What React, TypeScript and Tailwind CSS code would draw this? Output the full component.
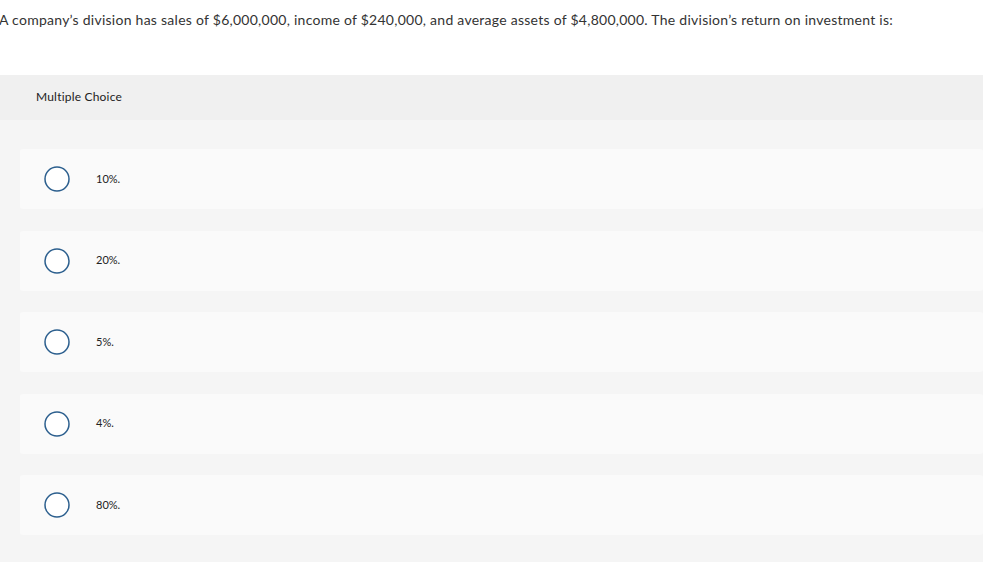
import React from 'react'

const OPTIONS = ['10%.', '20%.', '5%.', '4%.', '80%.']

function Radio() {
  return (
    <svg width="26" height="26" viewBox="0 0 26 26" className="shrink-0">
      <circle cx="13" cy="13" r="12" fill="#ffffff" stroke="#2c5f8e" strokeWidth="1.5" />
    </svg>
  )
}

export default function App() {
  return (
    <div className="w-[983px] h-[562px] overflow-hidden bg-white text-[#333333]" style={{ fontFamily: 'Lato, "Open Sans", sans-serif' }}>
      {/* Question */}
      <div className="h-[75px] pt-[11px]">
        <p className="text-[14px] leading-[18px] -ml-[1px] tracking-[0.26px]">
          A company’s division has sales of $6,000,000, income of $240,000, and average assets of $4,800,000. The division’s return on investment is:
        </p>
      </div>

      {/* Header */}
      <div className="h-[45px] bg-[#f0f0f0] flex items-center pl-[36px] pb-[2px]">
        <span className="text-[12px] text-[#222222] tracking-[0.2px]">Multiple Choice</span>
      </div>

      {/* Options */}
      <div className="bg-[#f5f5f5] h-[442px] pt-[29px] pl-[20px] flex flex-col gap-[21.5px]">
        {OPTIONS.map((opt) => (
          <div key={opt} className="h-[60px] bg-[#fafafa] rounded-[3px] flex items-center pl-[24px]">
            <Radio />
            <span className="ml-[26px] text-[11px] text-[#222222]">{opt}</span>
          </div>
        ))}
      </div>
    </div>
  )
}
